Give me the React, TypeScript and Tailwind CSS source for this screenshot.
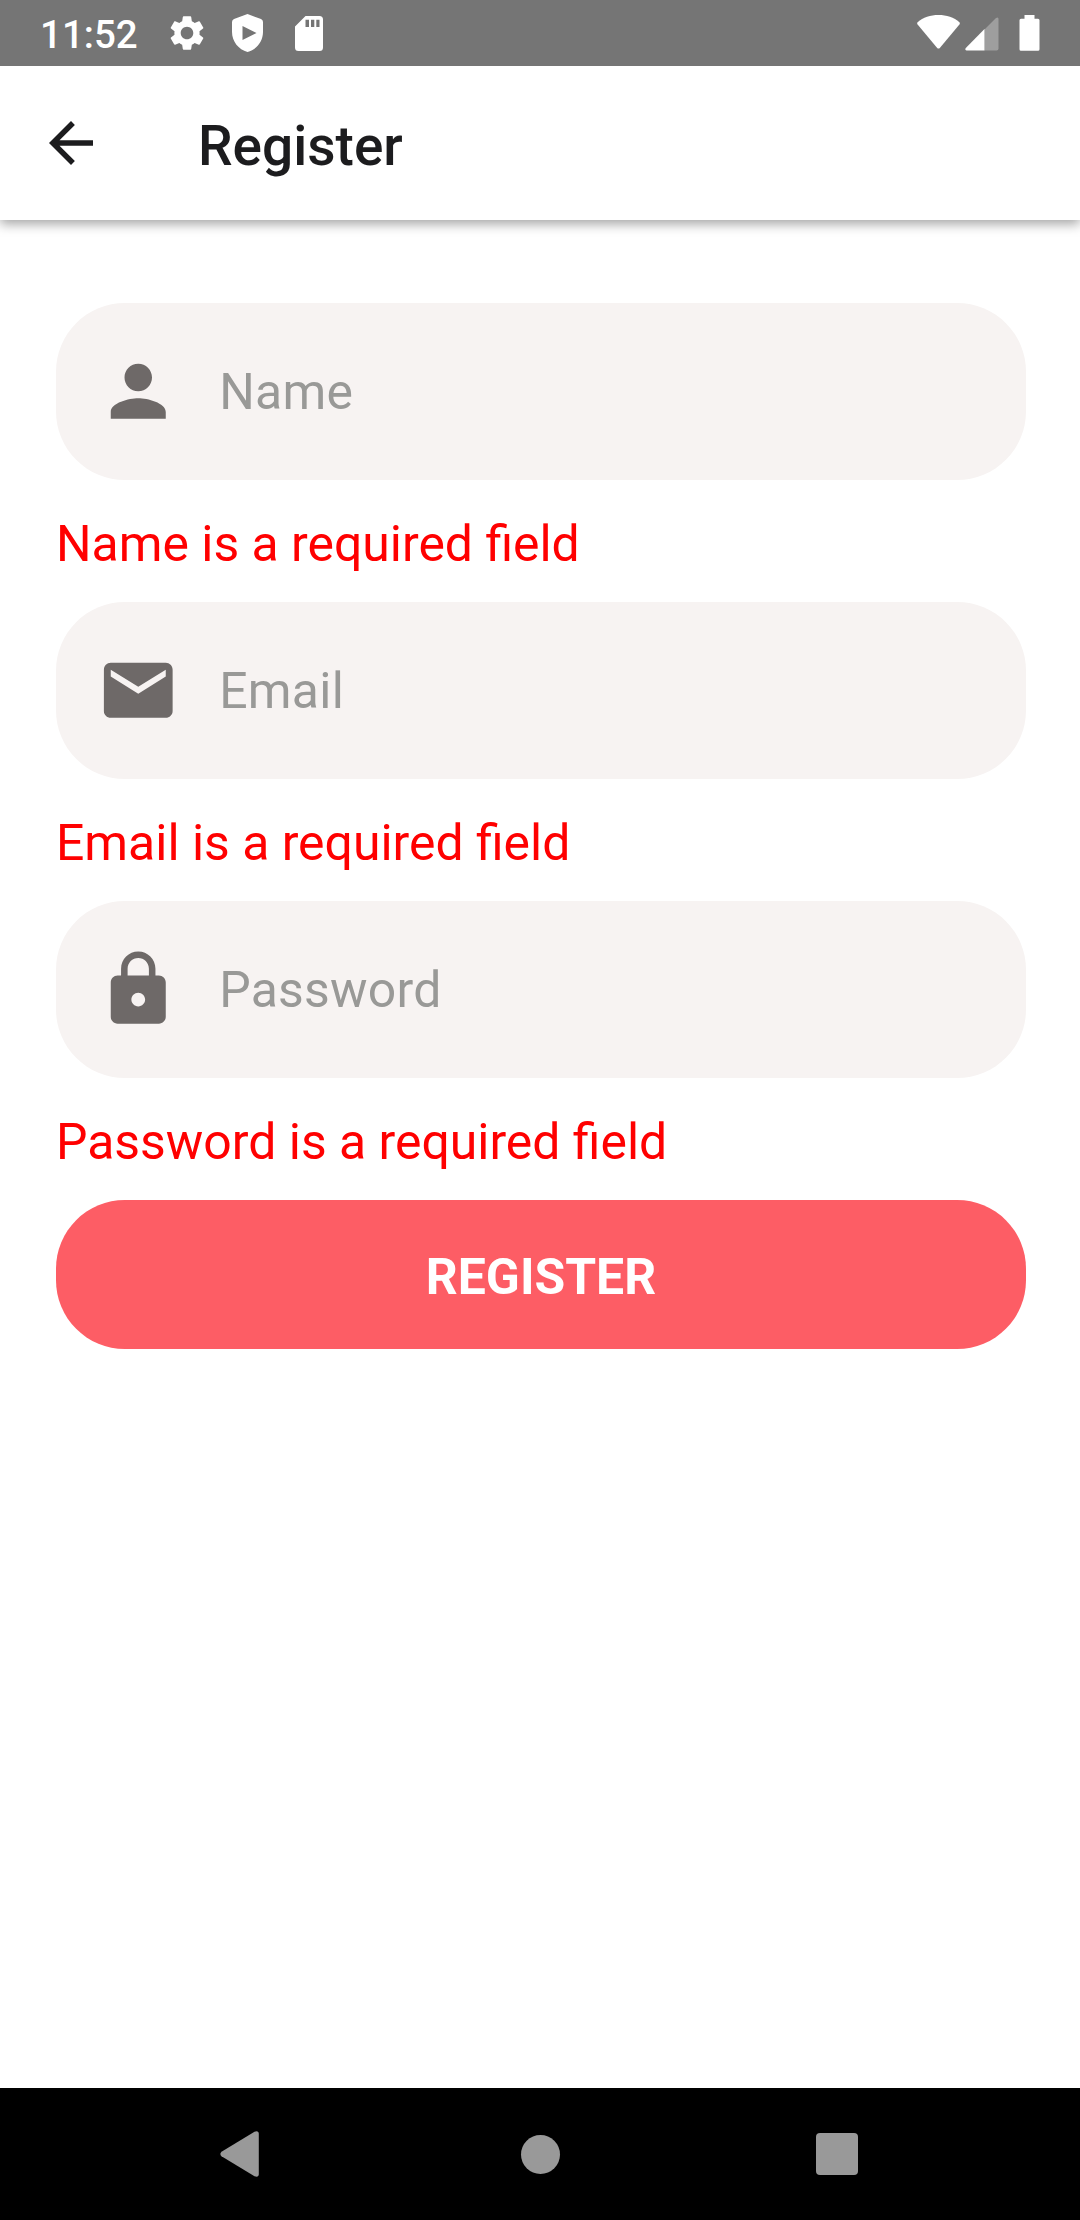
import React from "react";
import { MdArrowBack, MdEmail, MdLock, MdPerson, MdSettings } from "react-icons/md";
import type { IconType } from "react-icons";

function StatusBar() {
  return (
    <div className="relative z-10 flex h-[66px] items-center justify-between bg-[#757575] pl-10 pr-[40px] text-white">
      <div className="flex items-center">
        <span className="w-[126px] pt-[4px] text-[38.5px] leading-[62px] font-medium">11:52</span>
        <MdSettings className="size-[42px]" />
        <svg className="ml-[24px] h-[38px] w-[31px]" viewBox="0 0 31 38" fill="currentColor">
          <path
            fillRule="evenodd"
            d="M15.5 0 L29 5 Q31 6 31 8 V18 C31 27.5 24.5 35.5 15.5 38 C6.500 35.500 0 27.500 0 18 V8 Q0 6 2 5 Z M10.500 12 V26 L24.500 19 Z"
          />
        </svg>
        <svg className="mt-[1px] ml-[31.500px] h-[35px] w-[28px]" viewBox="0 0 28 35" fill="currentColor">
          <path
            fillRule="evenodd"
            d="M10.500 0 H24.500 Q28 0 28 3.500 V31.500 Q28 35 24.500 35 H3.500 Q0 35 0 31.500 V10.500 Z M10.500 3.700 V11 H14 V3.700 Z M16 3.700 V11 H19.300 V3.700 Z M21.300 3.700 V11 H24.500 V3.700 Z"
          />
        </svg>
      </div>
      <div className="flex items-center">
        <svg className="mt-[-2px] h-[34px] w-[43px]" viewBox="0 0 43 34" fill="currentColor">
          <path d="M0.600 7.200 C6 2.500 13.500 0 21.500 0 C29.500 0 37 2.500 42.400 7.200 Q43.300 8.300 42.400 9.600 L22.800 32.900 Q21.500 34.200 20.200 32.900 L0.600 9.600 Q-0.300 8.300 0.600 7.200 Z" />
        </svg>
        <svg className="mt-[2px] ml-[5px] h-[34px] w-[34px]" viewBox="0 0 34 34" fill="currentColor">
          <path
            fillOpacity="0.3"
            d="M19.500 12.500 L31 1 Q33.500 -0.500 33.500 2 V31.500 Q33.500 33.500 31.500 33.500 H19.500 Z"
          />
          <path d="M19.500 12 V33.500 H1.500 Q-0.500 33 0.800 31 Z" />
        </svg>
        <svg className="ml-[20px] h-[36px] w-[21px]" viewBox="0 0 21 36" fill="currentColor">
          <path d="M5.500 0 H15.500 V3.700 H19 Q20.500 3.700 20.500 5.200 V34.300 Q20.500 35.800 19 35.800 H2 Q0.500 35.800 0.500 34.300 V5.200 Q0.500 3.700 2 3.700 H5.500 Z" />
        </svg>
      </div>
    </div>
  );
}

function Header() {
  return (
    <header className="flex h-[154px] items-center bg-white pl-[38px] text-[#1c1c1e] shadow-[0_4px_11px_rgba(0,0,0,0.36)]">
      <MdArrowBack className="size-[66px]" />
      <h1 className="ml-[94px] pt-[5px] text-[55px] leading-[64px] font-medium">Register</h1>
    </header>
  );
}

type FieldProps = { icon: IconType; label: string };

function Field({ icon: Icon, label }: FieldProps) {
  return (
    <div className="h-[299px]">
      <div className="flex h-[177px] items-center rounded-[68.750px] bg-[#f7f3f2] pl-[41.250px]">
        <Icon className="size-[82.500px] text-[#6e6968]" />
        <span className="ml-[39.500px] text-[49.900px] leading-[58px] tracking-[0.25px] text-[#999997]">{label}</span>
      </div>
      <p className="pt-[35px] text-[49.900px] leading-[58px] text-[#ff0000]">
        {label} is a required field
      </p>
    </div>
  );
}

const fields: FieldProps[] = [
  { icon: MdPerson, label: "Name" },
  { icon: MdEmail, label: "Email" },
  { icon: MdLock, label: "Password" },
];

function NavigationBar() {
  return (
    <nav className="flex h-[132px] items-center justify-between bg-black pr-[222px] pl-[220px] text-[#999999]">
      <svg className="h-[46px] w-[39px]" viewBox="0 0 39 46" fill="currentColor">
        <path d="M1.500 20.700 L34.500 0.700 Q38.800 -0.700 38.800 3 V43 Q38.800 46.700 34.500 45.300 L1.500 25.300 Q-0.800 23 1.500 20.700 Z" />
      </svg>
      <div className="ml-[6px] size-[39px] rounded-full bg-[#999999]" />
      <div className="size-[42px] rounded-[4px] bg-[#999999]" />
    </nav>
  );
}

export default function App() {
  return (
    <div className="flex h-[2220px] w-[1080px] flex-col overflow-hidden bg-white font-['Roboto',sans-serif]">
      <StatusBar />
      <Header />
      <main className="flex-1 pt-[83px] pr-[54px] pl-[56px]">
        {fields.map((field) => (
          <Field key={field.label} {...field} />
        ))}
        <button className="block h-[149px] w-full rounded-[68.750px] bg-[#fd5d65] pt-[4px] text-center text-[49.900px] leading-[58px] font-bold text-white">
          REGISTER
        </button>
      </main>
      <NavigationBar />
    </div>
  );
}
